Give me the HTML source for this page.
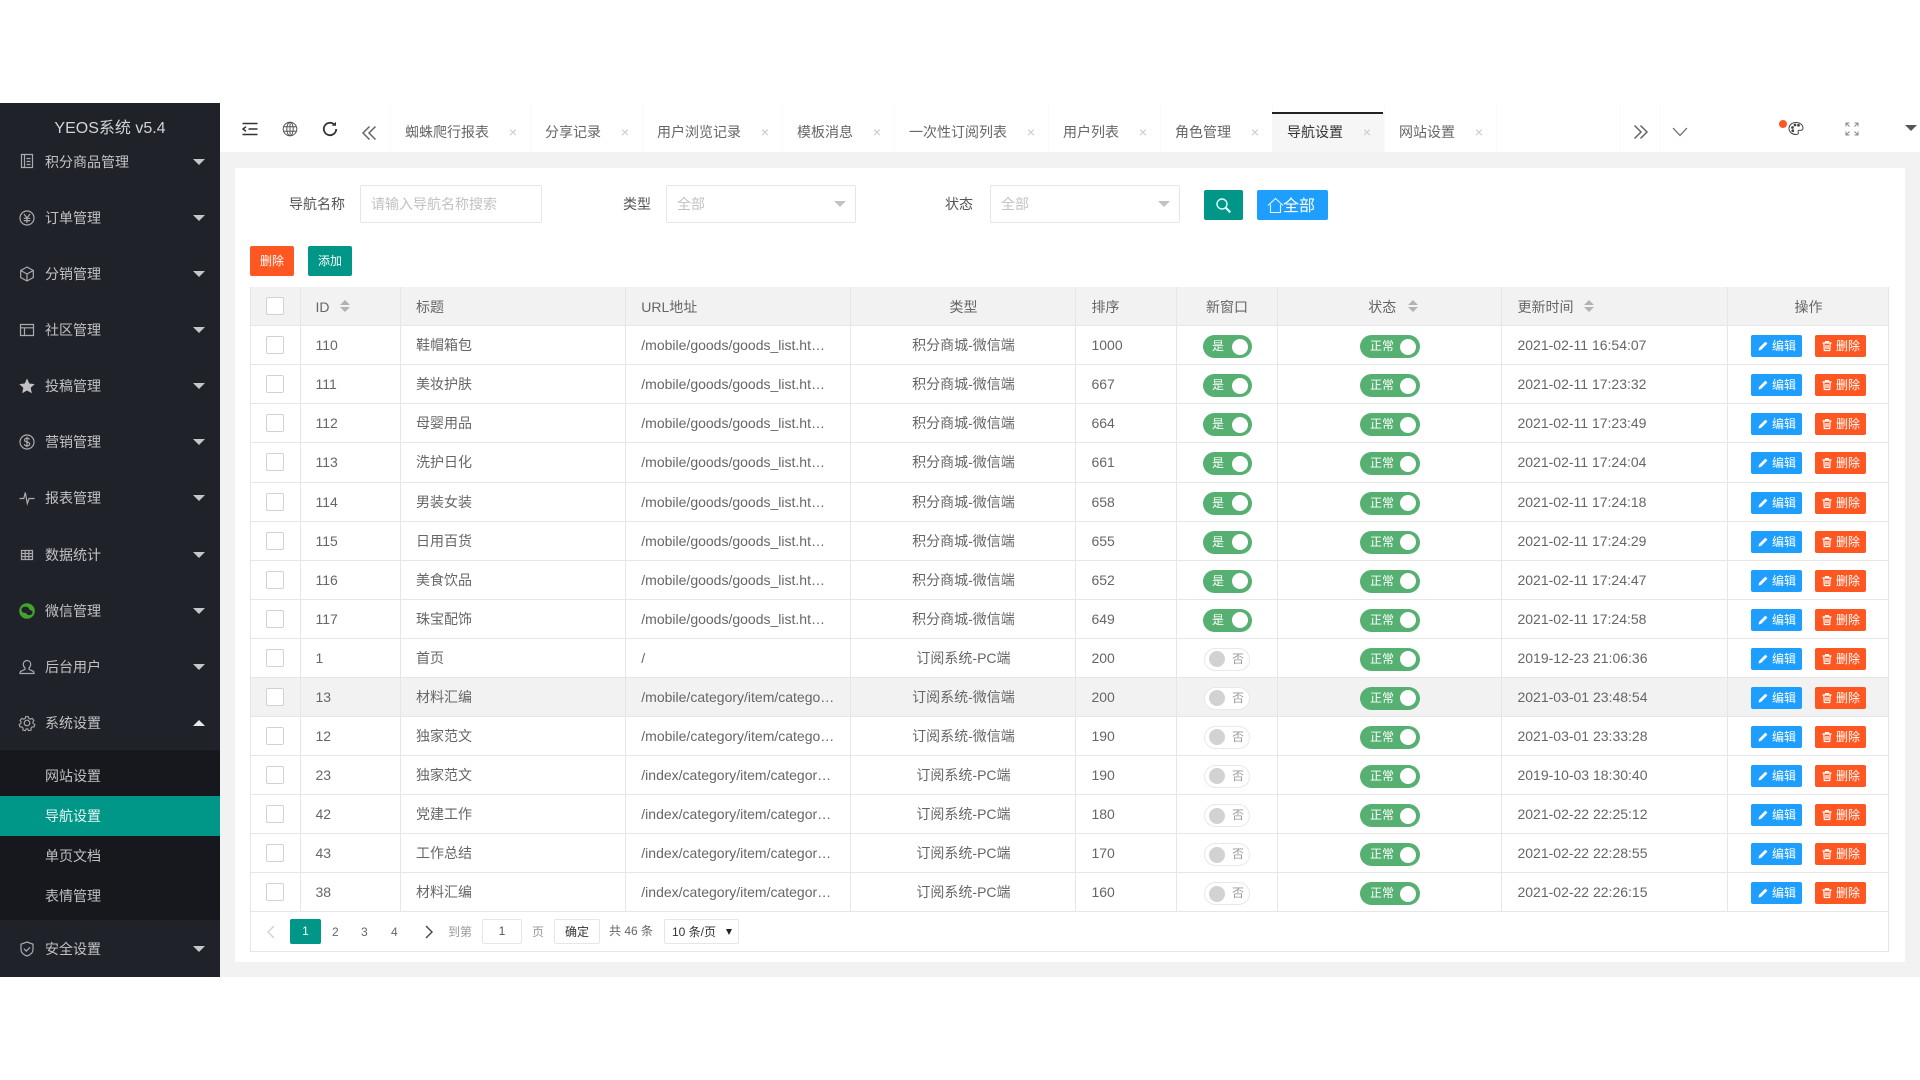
<!DOCTYPE html>
<html lang="zh"><head><meta charset="utf-8"><title>导航设置</title>
<style>
*{box-sizing:border-box}
html,body{margin:0;padding:0;width:1920px;height:1080px;overflow:hidden;background:#fff;font:14px "Liberation Sans","Noto Sans CJK SC",sans-serif;color:#666}
.a{position:absolute}
#side{left:0;top:103px;width:220px;height:874px;background:#20222a;overflow:hidden}
.m{position:absolute;left:45px;color:rgba(255,255,255,.72);line-height:20px;height:20px;white-space:nowrap}
.car{position:absolute;left:193px;width:0;height:0;border:6px solid transparent;border-top-color:rgba(255,255,255,.75);border-bottom:0}
.ic{position:absolute;left:17px;width:20px;height:20px;fill:none;stroke:rgba(255,255,255,.62);stroke-width:1.2}
#sub{left:0;top:647px;width:220px;height:170px;background:#17181e}
.tb{position:absolute;top:123px;line-height:18px;height:18px;color:#666;white-space:nowrap}
.x{position:absolute;top:123px;line-height:18px;color:#c9c9c9;font-size:14px;width:12px;text-align:center}
.dv{position:absolute;top:103px;height:49px;width:1px;background:#fafafa}
.lb{position:absolute;top:194px;line-height:20px;color:#555;white-space:nowrap}
.ip{position:absolute;top:185px;height:38px;border:1px solid #e6e6e6;border-radius:2px;background:#fff;color:#c2c2c2;padding-left:10px;line-height:36px;font-size:14px}
.tri{position:absolute;width:0;height:0;border:6px solid transparent;border-top-color:#c2c2c2;border-bottom:0}
.btn{position:absolute;border-radius:2px;color:#fff;text-align:center;white-space:nowrap}
#t{left:250px;top:287px;width:1639px;border-left:1px solid #e6e6e6;border-right:1px solid #e6e6e6;border-bottom:1px solid #e6e6e6;height:665px}
.r{display:flex;height:39.07px;border-bottom:1px solid #e6e6e6;position:relative}
.h{height:39.3px;background:#f2f2f2;border-bottom:1px solid #e6e6e6}
.r>div{height:100%;line-height:39px;border-right:1px solid #e6e6e6;padding:0 15px;white-space:nowrap;overflow:hidden;text-overflow:ellipsis;flex:none}
.h>div{line-height:40px!important}
.r>div:last-child{border-right:0}
.c0{width:49.5px;padding:0!important;position:relative}
.c1{width:100.5px}.c2{width:225.3px}.c3{width:225.2px}.c4{width:225px;text-align:center}.c5{width:100.5px}
.c6{width:101px;text-align:center;position:relative}.c7{width:224.5px;text-align:center;position:relative}.c8{width:225.5px;position:relative}.c9{width:161px;position:relative}
.ck{position:absolute;left:15px;top:10px;width:18px;height:18px;border:1px solid #d2d2d2;border-radius:2px;background:#fff}
.st{position:absolute;width:10px;height:15px}
.st:before,.st:after{content:"";position:absolute;left:0;width:0;height:0;border:5px solid transparent}
.st:before{border-bottom-color:#b2b2b2;border-top:0;top:1px}
.st:after{top:8px;border-top-color:#b2b2b2;border-bottom:0}
.sw{position:absolute;top:9px;height:23px;border-radius:12px;font-size:12px;line-height:23px;text-align:left}
.on{background:#55b071;color:#fff}
.on i{position:absolute;right:4px;top:3.5px;width:16px;height:16px;border-radius:50%;background:#fff}
.off{background:#fff;border:1px solid #e8e8e8;color:#999;line-height:21px}
.off i{position:absolute;left:4px;top:2.5px;width:16px;height:16px;border-radius:50%;background:#d2d2d2}
.e,.d{position:absolute;top:9px;height:22px;width:51px;border-radius:2px;color:#fff;font-size:12px;line-height:22px;text-align:left;padding-left:21px}
.e{left:23px;background:#1e9fff}.d{left:87px;background:#ff5722}
.e svg,.d svg{position:absolute;left:6px;top:5px;width:12px;height:12px}
.pg{position:absolute;font-size:12px;line-height:16px;color:#666;white-space:nowrap}
</style></head><body>
<svg width="0" height="0" style="position:absolute"><symbol id="pen" viewBox="0 0 12 12"><path d="M1.5 10.5l.6-2.6L8.4 1.6l2 2-6.3 6.3z" fill="#fff"/></symbol><symbol id="tr" viewBox="0 0 12 12"><path d="M1.5 3h9M4.5 3V1.6h3V3M2.8 3.5l.5 7h5.4l.5-7M5 5v4M7 5v4" fill="none" stroke="#fff" stroke-width="1.2"/></symbol></svg>

<div class="a" style="left:220px;top:152px;width:1700px;height:825px;background:#f2f2f2"></div>
<div class="a" style="left:235px;top:168px;width:1670px;height:794px;background:#fff"></div>

<div class="a" id="side">
<div style="position:absolute;left:0;top:16px;width:220px;text-align:center;font-size:16px;line-height:20px;color:rgba(255,255,255,.8)">YEOS系统 v5.4</div>
<div class="a" id="sub" style="position:absolute"></div>
<div style="position:absolute;left:0;top:693px;width:220px;height:40px;background:#009688"></div>

<svg class="ic" style="top:48px" viewBox="0 0 20 20"><path d="M4.500 3.500h11v13h-11zM7.500 3.500v13M9.500 7.500h4M9.500 10.500h4M9.500 13.500h4"/></svg>
<div class="m" style="top:49px">积分商品管理</div><div class="car" style="top:56px"></div>
<svg class="ic" style="top:105px" viewBox="0 0 20 20"><circle cx="10" cy="10" r="7"/><path d="M7 6l3 4 3-4M6.800 10.300h6.400M6.800 12.600h6.400M10 10v5"/></svg>
<div class="m" style="top:105px">订单管理</div><div class="car" style="top:112px"></div>
<svg class="ic" style="top:161px" viewBox="0 0 20 20"><path d="M10 3l6.300 3.500v7L10 17l-6.300-3.500v-7zM3.700 6.500L10 10l6.300-3.500M10 10v7"/></svg>
<div class="m" style="top:161px">分销管理</div><div class="car" style="top:168px"></div>
<svg class="ic" style="top:217px" viewBox="0 0 20 20"><path d="M3.500 4.500h13v11h-13zM3.500 7.800h13M7.500 7.800v7.700"/></svg>
<div class="m" style="top:217px">社区管理</div><div class="car" style="top:224px"></div>
<svg class="ic" style="top:273px;fill:rgba(255,255,255,.72);stroke:none" viewBox="0 0 20 20"><path d="M10 2.500l2.300 5 5.400.6-4 3.700 1.100 5.400L10 14.500l-4.800 2.700 1.100-5.400-4-3.700 5.400-.6z"/></svg>
<div class="m" style="top:273px">投稿管理</div><div class="car" style="top:280px"></div>
<svg class="ic" style="top:329px" viewBox="0 0 20 20"><circle cx="10" cy="10" r="7"/><path d="M12.500 7.500c-.5-1-1.500-1.300-2.500-1.300-1.400 0-2.500.7-2.500 1.900 0 2.600 5.200 1.200 5.200 3.800 0 1.200-1.200 1.900-2.700 1.900-1.200 0-2.300-.5-2.800-1.500M10 4.800v10.400"/></svg>
<div class="m" style="top:329px">营销管理</div><div class="car" style="top:336px"></div>
<svg class="ic" style="top:385px" viewBox="0 0 20 20"><path d="M2.500 10.500h4.300l1.500-6 2 11 1.700-5h5.500"/></svg>
<div class="m" style="top:385px">报表管理</div><div class="car" style="top:392px"></div>
<svg class="ic" style="top:442px" viewBox="0 0 20 20"><path d="M4.500 5.500h11v9h-11zM4.500 8.500h11M4.500 11.500h11M8.200 5.500v9M11.800 5.500v9"/></svg>
<div class="m" style="top:442px">数据统计</div><div class="car" style="top:449px"></div>
<svg class="ic" style="top:498px;stroke:none" viewBox="0 0 20 20"><circle cx="10" cy="10" r="7.800" fill="#44a32f"/><ellipse cx="8.400" cy="8.800" rx="4" ry="3.200" fill="#20222a"/><ellipse cx="12.300" cy="11.500" rx="3.300" ry="2.600" fill="#20222a"/></svg>
<div class="m" style="top:498px">微信管理</div><div class="car" style="top:505px"></div>
<svg class="ic" style="top:554px" viewBox="0 0 20 20"><path d="M10 3.500c2.300 0 3.700 1.700 3.700 3.800s-1.200 3.300-1.700 3.800v1.300l4 1.800c.8.400 1 1 1 2.300H3c0-1.300.2-1.900 1-2.300l4-1.800v-1.300c-.5-.5-1.700-1.700-1.700-3.800S7.700 3.500 10 3.500z"/></svg>
<div class="m" style="top:554px">后台用户</div><div class="car" style="top:561px"></div>
<svg class="ic" style="top:610px" viewBox="0 0 20 20"><circle cx="10" cy="10" r="2.800"/><path d="M8.500 3h3l.5 2 1.800.8 1.900-1 2 2.300-1.200 1.700.4 1.900 1.800 1-.9 2.700-2.100-.1-1.300 1.500.2 2.100-2.800.6-.9-1.900h-1.800l-.9 1.900-2.800-.6.200-2.100-1.300-1.500-2.100.1-.9-2.700 1.800-1 .4-1.900-1.200-1.700 2-2.300 1.900 1 1.800-.8z" transform="translate(1 1) scale(.9)"/></svg>
<div class="m" style="top:610px">系统设置</div><div class="car" style="top:617px;border-top:0;border-bottom:6px solid #fff;opacity:.9"></div>
<div class="m" style="top:663px">网站设置</div>
<div class="m" style="top:703px;color:rgba(255,255,255,.9)">导航设置</div>
<div class="m" style="top:743px">单页文档</div>
<div class="m" style="top:783px">表情管理</div>
<svg class="ic" style="top:836px" viewBox="0 0 20 20"><path d="M10 3l6 2.200v5.300c0 3.200-2.700 5.400-6 6.500-3.300-1.100-6-3.300-6-6.500V5.200zM7 9.800l2.300 2.300 3.800-3.800"/></svg>
<div class="m" style="top:836px">安全设置</div><div class="car" style="top:843px"></div>
</div>

<!-- top bar -->
<svg class="a" style="left:240px;top:119px;width:20px;height:20px;fill:none;stroke:#333;stroke-width:1.500" viewBox="0 0 20 20"><path d="M2.500 4.500h15M8.500 10h9M2.500 15.500h15M6 7.700L3 10l3 2.300" /></svg>
<svg class="a" style="left:282px;top:121px;width:16px;height:16px;fill:none;stroke:#555;stroke-width:1" viewBox="0 0 16 16"><circle cx="8" cy="8" r="6.800"/><ellipse cx="8" cy="8" rx="3.200" ry="6.800"/><path d="M1.500 5.700h13M1.500 10.300h13M8 1.200v13.600"/></svg>
<svg class="a" style="left:321px;top:120px;width:18px;height:18px;fill:none;stroke:#333;stroke-width:1.800" viewBox="0 0 18 18"><path d="M15.200 9a6.200 6.200 0 1 1-2-4.600"/><path d="M15 1.800v4h-4.200z" fill="#333" stroke="none"/></svg>
<svg class="a" style="left:361px;top:124px;width:18px;height:18px;fill:none;stroke:#666;stroke-width:1.500" viewBox="0 0 18 18"><path d="M8.500 2.500L2 9l6.500 6.500M14.500 2.500L8 9l6.500 6.500"/></svg>

<div class="dv" style="left:390px"></div><div class="dv" style="left:530px"></div><div class="dv" style="left:642px"></div><div class="dv" style="left:782px"></div><div class="dv" style="left:894px"></div><div class="dv" style="left:1048px"></div><div class="dv" style="left:1160px"></div><div class="dv" style="left:1272px"></div><div class="dv" style="left:1384px"></div><div class="dv" style="left:1496px"></div><div class="dv" style="left:1620px"></div><div class="dv" style="left:1660px"></div>
<div class="a" style="left:1272px;top:112px;width:112px;height:40px;background:#f6f6f6"></div>
<div class="a" style="left:1272px;top:112px;width:111px;height:2px;background:#222"></div>

<div class="tb" style="left:405px">蜘蛛爬行报表</div><div class="x" style="left:507px">×</div>
<div class="tb" style="left:545px">分享记录</div><div class="x" style="left:619px">×</div>
<div class="tb" style="left:657px">用户浏览记录</div><div class="x" style="left:759px">×</div>
<div class="tb" style="left:797px">模板消息</div><div class="x" style="left:871px">×</div>
<div class="tb" style="left:909px">一次性订阅列表</div><div class="x" style="left:1025px">×</div>
<div class="tb" style="left:1063px">用户列表</div><div class="x" style="left:1137px">×</div>
<div class="tb" style="left:1175px">角色管理</div><div class="x" style="left:1249px">×</div>
<div class="tb" style="left:1287px;color:#333">导航设置</div><div class="x" style="left:1361px">×</div>
<div class="tb" style="left:1399px">网站设置</div><div class="x" style="left:1473px">×</div>

<svg class="a" style="left:1631px;top:123px;width:18px;height:18px;fill:none;stroke:#666;stroke-width:1.500" viewBox="0 0 18 18"><path d="M3.500 2.500L10 9l-6.500 6.500M9.500 2.500L16 9l-6.500 6.500"/></svg>
<svg class="a" style="left:1672px;top:125px;width:16px;height:14px;fill:none;stroke:#666;stroke-width:1.200" viewBox="0 0 16 14"><path d="M1 3l7 7.500L15 3"/></svg>
<div class="a" style="left:1779px;top:120px;width:8px;height:8px;border-radius:50%;background:#ff5722"></div>
<svg class="a" style="left:1788px;top:121px;width:16px;height:15px;fill:none;stroke:#444;stroke-width:1" viewBox="0 0 16 15"><path d="M8 1.500c4 0 7 2.400 7 5.500 0 2-1.500 2.500-3 2.300-1.500-.2-2.300.5-1.800 1.700.6 1.400-.2 2.500-2.200 2.500-3.500 0-7-2.200-7-6 0-3.500 3-6 7-6z"/><circle cx="4.500" cy="6.500" r=".9" fill="#444"/><circle cx="7" cy="4" r=".9" fill="#444"/><circle cx="10.500" cy="4.300" r=".9" fill="#444"/><circle cx="4.800" cy="9.700" r=".9" fill="#444"/></svg>
<svg class="a" style="left:1845px;top:122px;width:14px;height:14px;fill:none;stroke:#888;stroke-width:1" viewBox="0 0 14 14"><path d="M1 4.500V1h3.500M1 1l3.500 3.500M13 4.500V1H9.500M13 1L9.500 4.500M1 9.500V13h3.500M1 13l3.500-3.500M13 9.500V13H9.500M13 13L9.500 9.500"/></svg>
<div class="a" style="left:1905px;top:125px;width:0;height:0;border:6px solid transparent;border-top-color:#555;border-bottom:0"></div>

<!-- search -->
<div class="lb" style="left:289px">导航名称</div>
<div class="ip" style="left:360px;width:182px">请输入导航名称搜索</div>
<div class="lb" style="left:623px">类型</div>
<div class="ip" style="left:666px;width:190px">全部</div><div class="tri" style="left:834px;top:201px"></div>
<div class="lb" style="left:945px">状态</div>
<div class="ip" style="left:990px;width:190px">全部</div><div class="tri" style="left:1158px;top:201px"></div>
<div class="btn" style="left:1204px;top:190px;width:39px;height:30px;background:#009688"><svg style="position:absolute;left:11px;top:7px;width:17px;height:17px;fill:none;stroke:#dff;stroke-width:1.400" viewBox="0 0 17 17"><circle cx="7" cy="7" r="5"/><path d="M10.800 10.800l4.500 4.500" stroke-width="2.200"/></svg></div>
<div class="btn" style="left:1257px;top:190px;width:71px;height:30px;background:#1e9fff;font-size:16px;line-height:33px;padding-left:26px;text-align:left"><svg style="position:absolute;left:10px;top:7px;width:17px;height:17px;fill:none;stroke:#e8f6ff;stroke-width:1.100" viewBox="0 0 17 17"><path d="M1 8.500L8.500 1.500 16 8.500M3.500 7.500v8h10v-8"/></svg>全部</div>
<div class="btn" style="left:250px;top:246px;width:44px;height:30px;background:#ff5722;font-size:12px;line-height:30px">删除</div>
<div class="btn" style="left:308px;top:246px;width:44px;height:30px;background:#009688;font-size:12px;line-height:30px">添加</div>

<!-- table -->
<div class="a" id="t">
<div class="r h" style="color:#666"><div class="c0"><span class="ck"></span></div><div class="c1">ID<span class="st" style="left:89px;top:12px"></span></div><div class="c2">标题</div><div class="c3">URL地址</div><div class="c4">类型</div><div class="c5">排序</div><div class="c6" style="padding:0;text-align:center">新窗口</div><div class="c7" style="padding:0 15px 0 0">状态<span class="st" style="left:130px;top:12px"></span></div><div class="c8">更新时间<span class="st" style="left:82px;top:12px"></span></div><div class="c9" style="text-align:center">操作</div></div>

<div class="r"><div class="c0"><span class="ck"></span></div><div class="c1">110</div><div class="c2">鞋帽箱包</div><div class="c3">/mobile/goods/goods_list.html?id=1</div><div class="c4">积分商城-微信端</div><div class="c5">1000</div><div class="c6"><span class="sw on" style="left:26px;width:49px;padding-left:9px">是<i></i></span></div><div class="c7"><span class="sw on" style="left:82px;width:60px;padding-left:10px">正常<i></i></span></div><div class="c8">2021-02-11 16:54:07</div><div class="c9"><span class="e"><svg><use href="#pen"/></svg>编辑</span><span class="d"><svg><use href="#tr"/></svg>删除</span></div></div>
<div class="r"><div class="c0"><span class="ck"></span></div><div class="c1">111</div><div class="c2">美妆护肤</div><div class="c3">/mobile/goods/goods_list.html?id=2</div><div class="c4">积分商城-微信端</div><div class="c5">667</div><div class="c6"><span class="sw on" style="left:26px;width:49px;padding-left:9px">是<i></i></span></div><div class="c7"><span class="sw on" style="left:82px;width:60px;padding-left:10px">正常<i></i></span></div><div class="c8">2021-02-11 17:23:32</div><div class="c9"><span class="e"><svg><use href="#pen"/></svg>编辑</span><span class="d"><svg><use href="#tr"/></svg>删除</span></div></div>
<div class="r"><div class="c0"><span class="ck"></span></div><div class="c1">112</div><div class="c2">母婴用品</div><div class="c3">/mobile/goods/goods_list.html?id=3</div><div class="c4">积分商城-微信端</div><div class="c5">664</div><div class="c6"><span class="sw on" style="left:26px;width:49px;padding-left:9px">是<i></i></span></div><div class="c7"><span class="sw on" style="left:82px;width:60px;padding-left:10px">正常<i></i></span></div><div class="c8">2021-02-11 17:23:49</div><div class="c9"><span class="e"><svg><use href="#pen"/></svg>编辑</span><span class="d"><svg><use href="#tr"/></svg>删除</span></div></div>
<div class="r"><div class="c0"><span class="ck"></span></div><div class="c1">113</div><div class="c2">洗护日化</div><div class="c3">/mobile/goods/goods_list.html?id=4</div><div class="c4">积分商城-微信端</div><div class="c5">661</div><div class="c6"><span class="sw on" style="left:26px;width:49px;padding-left:9px">是<i></i></span></div><div class="c7"><span class="sw on" style="left:82px;width:60px;padding-left:10px">正常<i></i></span></div><div class="c8">2021-02-11 17:24:04</div><div class="c9"><span class="e"><svg><use href="#pen"/></svg>编辑</span><span class="d"><svg><use href="#tr"/></svg>删除</span></div></div>
<div class="r"><div class="c0"><span class="ck"></span></div><div class="c1">114</div><div class="c2">男装女装</div><div class="c3">/mobile/goods/goods_list.html?id=5</div><div class="c4">积分商城-微信端</div><div class="c5">658</div><div class="c6"><span class="sw on" style="left:26px;width:49px;padding-left:9px">是<i></i></span></div><div class="c7"><span class="sw on" style="left:82px;width:60px;padding-left:10px">正常<i></i></span></div><div class="c8">2021-02-11 17:24:18</div><div class="c9"><span class="e"><svg><use href="#pen"/></svg>编辑</span><span class="d"><svg><use href="#tr"/></svg>删除</span></div></div>
<div class="r"><div class="c0"><span class="ck"></span></div><div class="c1">115</div><div class="c2">日用百货</div><div class="c3">/mobile/goods/goods_list.html?id=6</div><div class="c4">积分商城-微信端</div><div class="c5">655</div><div class="c6"><span class="sw on" style="left:26px;width:49px;padding-left:9px">是<i></i></span></div><div class="c7"><span class="sw on" style="left:82px;width:60px;padding-left:10px">正常<i></i></span></div><div class="c8">2021-02-11 17:24:29</div><div class="c9"><span class="e"><svg><use href="#pen"/></svg>编辑</span><span class="d"><svg><use href="#tr"/></svg>删除</span></div></div>
<div class="r"><div class="c0"><span class="ck"></span></div><div class="c1">116</div><div class="c2">美食饮品</div><div class="c3">/mobile/goods/goods_list.html?id=7</div><div class="c4">积分商城-微信端</div><div class="c5">652</div><div class="c6"><span class="sw on" style="left:26px;width:49px;padding-left:9px">是<i></i></span></div><div class="c7"><span class="sw on" style="left:82px;width:60px;padding-left:10px">正常<i></i></span></div><div class="c8">2021-02-11 17:24:47</div><div class="c9"><span class="e"><svg><use href="#pen"/></svg>编辑</span><span class="d"><svg><use href="#tr"/></svg>删除</span></div></div>
<div class="r"><div class="c0"><span class="ck"></span></div><div class="c1">117</div><div class="c2">珠宝配饰</div><div class="c3">/mobile/goods/goods_list.html?id=8</div><div class="c4">积分商城-微信端</div><div class="c5">649</div><div class="c6"><span class="sw on" style="left:26px;width:49px;padding-left:9px">是<i></i></span></div><div class="c7"><span class="sw on" style="left:82px;width:60px;padding-left:10px">正常<i></i></span></div><div class="c8">2021-02-11 17:24:58</div><div class="c9"><span class="e"><svg><use href="#pen"/></svg>编辑</span><span class="d"><svg><use href="#tr"/></svg>删除</span></div></div>
<div class="r"><div class="c0"><span class="ck"></span></div><div class="c1">1</div><div class="c2">首页</div><div class="c3">/</div><div class="c4">订阅系统-PC端</div><div class="c5">200</div><div class="c6"><span class="sw off" style="left:27px;width:46px;padding-left:27px">否<i></i></span></div><div class="c7"><span class="sw on" style="left:82px;width:60px;padding-left:10px">正常<i></i></span></div><div class="c8">2019-12-23 21:06:36</div><div class="c9"><span class="e"><svg><use href="#pen"/></svg>编辑</span><span class="d"><svg><use href="#tr"/></svg>删除</span></div></div>
<div class="r" style="background:#f2f2f2"><div class="c0"><span class="ck"></span></div><div class="c1">13</div><div class="c2">材料汇编</div><div class="c3">/mobile/category/item/category_id/1</div><div class="c4">订阅系统-微信端</div><div class="c5">200</div><div class="c6"><span class="sw off" style="left:27px;width:46px;padding-left:27px">否<i></i></span></div><div class="c7"><span class="sw on" style="left:82px;width:60px;padding-left:10px">正常<i></i></span></div><div class="c8">2021-03-01 23:48:54</div><div class="c9"><span class="e"><svg><use href="#pen"/></svg>编辑</span><span class="d"><svg><use href="#tr"/></svg>删除</span></div></div>
<div class="r"><div class="c0"><span class="ck"></span></div><div class="c1">12</div><div class="c2">独家范文</div><div class="c3">/mobile/category/item/category_id/2</div><div class="c4">订阅系统-微信端</div><div class="c5">190</div><div class="c6"><span class="sw off" style="left:27px;width:46px;padding-left:27px">否<i></i></span></div><div class="c7"><span class="sw on" style="left:82px;width:60px;padding-left:10px">正常<i></i></span></div><div class="c8">2021-03-01 23:33:28</div><div class="c9"><span class="e"><svg><use href="#pen"/></svg>编辑</span><span class="d"><svg><use href="#tr"/></svg>删除</span></div></div>
<div class="r"><div class="c0"><span class="ck"></span></div><div class="c1">23</div><div class="c2">独家范文</div><div class="c3">/index/category/item/category_id/2</div><div class="c4">订阅系统-PC端</div><div class="c5">190</div><div class="c6"><span class="sw off" style="left:27px;width:46px;padding-left:27px">否<i></i></span></div><div class="c7"><span class="sw on" style="left:82px;width:60px;padding-left:10px">正常<i></i></span></div><div class="c8">2019-10-03 18:30:40</div><div class="c9"><span class="e"><svg><use href="#pen"/></svg>编辑</span><span class="d"><svg><use href="#tr"/></svg>删除</span></div></div>
<div class="r"><div class="c0"><span class="ck"></span></div><div class="c1">42</div><div class="c2">党建工作</div><div class="c3">/index/category/item/category_id/3</div><div class="c4">订阅系统-PC端</div><div class="c5">180</div><div class="c6"><span class="sw off" style="left:27px;width:46px;padding-left:27px">否<i></i></span></div><div class="c7"><span class="sw on" style="left:82px;width:60px;padding-left:10px">正常<i></i></span></div><div class="c8">2021-02-22 22:25:12</div><div class="c9"><span class="e"><svg><use href="#pen"/></svg>编辑</span><span class="d"><svg><use href="#tr"/></svg>删除</span></div></div>
<div class="r"><div class="c0"><span class="ck"></span></div><div class="c1">43</div><div class="c2">工作总结</div><div class="c3">/index/category/item/category_id/4</div><div class="c4">订阅系统-PC端</div><div class="c5">170</div><div class="c6"><span class="sw off" style="left:27px;width:46px;padding-left:27px">否<i></i></span></div><div class="c7"><span class="sw on" style="left:82px;width:60px;padding-left:10px">正常<i></i></span></div><div class="c8">2021-02-22 22:28:55</div><div class="c9"><span class="e"><svg><use href="#pen"/></svg>编辑</span><span class="d"><svg><use href="#tr"/></svg>删除</span></div></div>
<div class="r"><div class="c0"><span class="ck"></span></div><div class="c1">38</div><div class="c2">材料汇编</div><div class="c3">/index/category/item/category_id/5</div><div class="c4">订阅系统-PC端</div><div class="c5">160</div><div class="c6"><span class="sw off" style="left:27px;width:46px;padding-left:27px">否<i></i></span></div><div class="c7"><span class="sw on" style="left:82px;width:60px;padding-left:10px">正常<i></i></span></div><div class="c8">2021-02-22 22:26:15</div><div class="c9"><span class="e"><svg><use href="#pen"/></svg>编辑</span><span class="d"><svg><use href="#tr"/></svg>删除</span></div></div>
</div>

<!-- pagination -->
<svg class="a" style="left:266px;top:924px;width:10px;height:16px;fill:none;stroke:#d2d2d2;stroke-width:1.400" viewBox="0 0 10 16"><path d="M8 2L2 8l6 6"/></svg>
<div class="btn" style="left:290px;top:919px;width:31px;height:25px;background:#009688;font-size:12px;line-height:25px">1</div>
<div class="pg" style="left:332px;top:924px">2</div><div class="pg" style="left:361px;top:924px">3</div><div class="pg" style="left:391px;top:924px">4</div>
<svg class="a" style="left:424px;top:924px;width:10px;height:16px;fill:none;stroke:#444;stroke-width:1.400" viewBox="0 0 10 16"><path d="M2 2l6 6-6 6"/></svg>
<div class="pg" style="left:448px;top:924px;color:#999">到第</div>
<div class="a" style="left:482px;top:919px;width:40px;height:25px;border:1px solid #e6e6e6;border-radius:2px;text-align:center;font-size:12px;line-height:23px;color:#555">1</div>
<div class="pg" style="left:532px;top:924px;color:#999">页</div>
<div class="a" style="left:554px;top:919px;width:46px;height:25px;border:1px solid #e6e6e6;border-radius:2px;text-align:center;font-size:12px;line-height:25px;color:#333">确定</div>
<div class="pg" style="left:609px;top:923px">共 46 条</div>
<div class="a" style="left:664px;top:919px;width:75px;height:25px;border:1px solid #e6e6e6;border-radius:2px;font-size:12px;line-height:25px;color:#333;padding-left:7px;white-space:nowrap">10 条/页</div>
<div class="a" style="left:726px;top:929px;width:0;height:0;border:3.500px solid transparent;border-top:6px solid #222;border-bottom:0"></div>
</body></html>
